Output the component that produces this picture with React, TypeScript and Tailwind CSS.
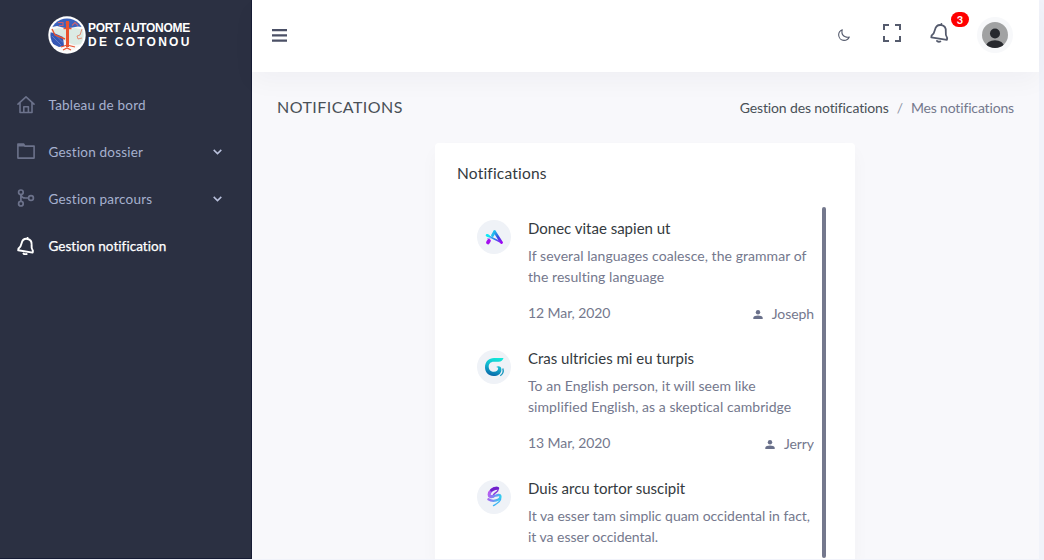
import type { ReactNode } from "react";

function HomeIcon() {
  return (
    <svg className="size-[18px] shrink-0 text-[#6c728b]" viewBox="0 0 18 18" fill="none" stroke="currentColor" strokeWidth="1.6" strokeLinejoin="round" strokeLinecap="round">
      <path d="M1 8.2 9 .9l8 7.300M3 6.700V16.500h12V6.700M6.800 16.500v-5.700h4.600v5.700" />
    </svg>
  );
}

function FolderIcon() {
  return (
    <svg className="mb-[2px] size-[18px] shrink-0 text-[#6c728b]" viewBox="0 0 18 18" fill="none" stroke="currentColor" strokeWidth="1.6" strokeLinejoin="round">
      <path d="M.9 2h5.800l1.100 2.100h9.300v12H.9z" />
      <path d="M1 2.700h6M1 3.600h6.500" />
    </svg>
  );
}

function BranchIcon() {
  return (
    <svg className="mb-[2px] size-[18px] shrink-0 text-[#6c728b]" viewBox="0 0 18 18" fill="none" stroke="currentColor" strokeWidth="1.7">
      <circle cx="3.900" cy="3.300" r="2.300" />
      <circle cx="3.900" cy="14.700" r="2.300" />
      <circle cx="14" cy="9" r="2.400" />
      <path d="M3.900 5.600v6.800M4 6.200C4.800 8.500 6.300 9 8.300 9h3.300" />
    </svg>
  );
}

function BellIcon({ className, strokeWidth }: { className: string; strokeWidth: number }) {
  return (
    <svg className={className} viewBox="0 0 20 20" fill="none" stroke="currentColor" strokeWidth={strokeWidth} strokeLinejoin="round" strokeLinecap="round">
      <g transform="rotate(9 10 10)">
        <path d="M10 2C6.600 2 4.700 4.600 4.500 7.700 4.400 10.200 4.100 12 2.100 13.800v1.900h15.800v-1.900c-2-1.800-2.300-3.600-2.400-6.100C15.300 4.600 13.400 2 10 2z" />
        <path d="M10 .9v1" />
        <path d="M8.300 18.300q1.700 1 3.400 0" />
      </g>
    </svg>
  );
}

function Chevron() {
  return (
    <svg className="ml-auto h-[6px] w-[9px] text-[#b9c0dc]" viewBox="0 0 9 6" fill="none" stroke="currentColor" strokeWidth="1.5">
      <path d="M.7.9 4.500 4.600 8.300.9" />
    </svg>
  );
}

function PortLogo() {
  return (
    <svg className="size-[38px] shrink-0" viewBox="0 0 38 38">
      <clipPath id="port-disc">
        <circle cx="19" cy="19" r="16.600" />
      </clipPath>
      <circle cx="19" cy="19" r="18.700" fill="#fff" />
      <g clipPath="url(#port-disc)">
        <path d="M0 0h38v38H0z" fill="#f8f7f5" />
        <path d="M0 0h38v11.500l-8-1-11 2-10-2.500-9 2z" fill="#3a62bd" />
        <path d="M3 14l8-2 8 2 8-2 9 2v14l-10 1-7-3z" fill="#dcebe4" />
        <path d="M1 16l5 1 9 4 1 9-5 1L1 26z" fill="#3557b4" />
        <path d="M4 20l9 9M7 18.500l8 8" stroke="#6c83cc" strokeWidth=".8" />
        <path d="M10 6.500h5v3h-4M24 9.500l3-3 3 3" fill="none" stroke="#c76070" strokeWidth="1.200" />
      </g>
      <g fill="none" stroke="#e9532f">
        <path d="M19.500 5v26" strokeWidth="3" />
        <path d="M15.500 12.500h8" strokeWidth="1.500" />
        <path d="M4 13l3 6 10 4" strokeWidth="1.400" />
        <path d="M13 31l6-2 8 2M15 34l4-2 4 2" strokeWidth="1.200" />
        <path d="M34 13l-2 6-3 1 1 3 4-1" strokeWidth=".6" />
      </g>
      <circle cx="19.500" cy="7" r="1.900" fill="#e9532f" />
    </svg>
  );
}

function ArrowLogo() {
  return (
    <svg className="size-[34px]" viewBox="0 0 34 34" fill="none" strokeLinecap="round">
      <defs>
        <linearGradient id="arrow-right" x1="17" y1="11" x2="25" y2="23" gradientUnits="userSpaceOnUse">
          <stop stopColor="#20c5ef" />
          <stop offset=".5" stopColor="#354fe0" />
          <stop offset="1" stopColor="#a300f5" />
        </linearGradient>
        <linearGradient id="arrow-cross" x1="9" y1="15" x2="25" y2="22" gradientUnits="userSpaceOnUse">
          <stop stopColor="#0ee8f5" />
          <stop offset=".55" stopColor="#3579ee" />
          <stop offset="1" stopColor="#a300f5" />
        </linearGradient>
      </defs>
      <path d="M15.500 15.500 17.600 11.800" stroke="#22bfee" strokeWidth="2.800" />
      <path d="M17.600 11.800 24.500 22.500" stroke="url(#arrow-right)" strokeWidth="2.800" />
      <path d="M10.300 15.400 24.500 22.500" stroke="url(#arrow-cross)" strokeWidth="1.700" />
      <path d="M10 15.300l1.500.7" stroke="#0ee8f5" strokeWidth="2.600" />
      <path d="M12 20.700 10.900 22.500" stroke="#a510ef" strokeWidth="3.600" />
      <path d="M10.500 18.600l3-.6" stroke="#9faaf5" strokeWidth="1" />
    </svg>
  );
}

function SwirlGLogo() {
  return (
    <svg className="size-[34px]" viewBox="0 0 34 34" fill="none">
      <defs>
        <linearGradient id="swirl-g" x1="20" y1="8" x2="15" y2="26" gradientUnits="userSpaceOnUse">
          <stop stopColor="#12e8d8" />
          <stop offset=".5" stopColor="#12b2cf" />
          <stop offset="1" stopColor="#0866a8" />
        </linearGradient>
      </defs>
      <path d="M26.500 8q-1 3.700-5 3.800h-4.800c-3.300 0-5 2.300-5 5 0 3 2.300 5 5.200 5 2.600 0 4.400-1.600 4.300-4.100l-2-.6c1.700-1.500 5.500-1 5.200 2.800-.3 3.900-3.500 6.100-7.900 6.100-5 0-8.500-3.500-8.500-8.700C8 11.500 12 8 17 8z" fill="url(#swirl-g)" />
      <path d="M25.800 18.500c1 3-.4 5.800-2.500 7.200" stroke="#1596bd" strokeWidth="1.300" />
    </svg>
  );
}

function SwirlSLogo() {
  return (
    <svg className="size-[34px]" viewBox="0 0 34 34" fill="none" strokeLinecap="round">
      <defs>
        <linearGradient id="swirl-s" x1="10" y1="13" x2="24" y2="19" gradientUnits="userSpaceOnUse">
          <stop stopColor="#c552f0" />
          <stop offset=".5" stopColor="#7d86f3" />
          <stop offset="1" stopColor="#25d9ee" />
        </linearGradient>
      </defs>
      <path d="M20 8.200c-4 0-7.800 3.300-7.800 6.500 0 2 2 2.200 4 1.500" stroke="url(#swirl-s)" strokeWidth="3.200" />
      <path d="M20.800 8.400c-2.300-.5-4.300.2-6.300 1.800" stroke="#7120ca" strokeWidth="2.800" />
      <path d="M21 9.600c.3 2.200-3 2.600-4.300 5" stroke="#8a3bdc" strokeWidth="1.500" />
      <path d="M14 16.600c3.500 0 8.800-3.200 9.400-.5.500 2.800-3 4.700-7 4.700-2 0-3.600-.5-5-1.500" stroke="url(#swirl-s)" strokeWidth="2.300" />
      <path d="M23.700 19c-.5 3-3.400 4.400-7.200 6.600" stroke="#3fb5f2" strokeWidth="1.400" />
    </svg>
  );
}

function PersonIcon() {
  return (
    <svg className="mr-[9px] h-[9px] w-[10px]" viewBox="0 0 10 9" fill="#69708a">
      <circle cx="5" cy="2.200" r="2.200" />
      <path d="M.3 9V7.800C.3 6.200 3 5.400 5 5.400s4.700.8 4.700 2.400V9z" />
    </svg>
  );
}

function MenuItem({ icon, children, active, expandable }: { icon: ReactNode; children: ReactNode; active?: boolean; expandable?: boolean }) {
  return (
    <a className={`flex h-[46.900px] items-center pr-[29px] pl-[17px] text-[13.500px] ${active ? "text-white" : "text-[#a6b0cf]"}`}>
      {icon}
      <span className={active ? "ml-[13px] tracking-[0.040px] [-webkit-text-stroke:0.250px_currentColor]" : "ml-[13.500px] tracking-[0.200px]"}>{children}</span>
      {expandable && <Chevron />}
    </a>
  );
}

interface Notice {
  title: string;
  lines: string[];
  dense?: boolean;
  date?: string;
  author?: string;
  logo: ReactNode;
}

const notices: Notice[] = [
  {
    title: "Donec vitae sapien ut",
    lines: ["If several languages coalesce, the grammar of", "the resulting language"],
    date: "12 Mar, 2020",
    author: "Joseph",
    logo: <ArrowLogo />,
  },
  {
    title: "Cras ultricies mi eu turpis",
    lines: ["To an English person, it will seem like", "simplified English, as a skeptical cambridge"],
    date: "13 Mar, 2020",
    author: "Jerry",
    logo: <SwirlGLogo />,
  },
  {
    title: "Duis arcu tortor suscipit",
    lines: ["It va esser tam simplic quam occidental in fact,", "it va esser occidental."],
    dense: true,
    logo: <SwirlSLogo />,
  },
];

function NoticeItem({ notice }: { notice: Notice }) {
  return (
    <li className="flex h-[130px] shrink-0">
      <div className="mt-1 size-[34px] shrink-0 rounded-full bg-[#eff2f7]">{notice.logo}</div>
      <div className="ml-[17px] w-[286px] text-[14px] text-[#74788d]">
        <h5 className="h-[30px] text-[15px] leading-[25px] text-[#343a40]">{notice.title}</h5>
        <p className={`leading-[20.500px] whitespace-nowrap ${notice.dense ? "tracking-[-0.025px]" : "tracking-[0.060px]"}`}>
          {notice.lines.map((line) => (
            <span className="block" key={line}>{line}</span>
          ))}
        </p>
        {notice.date && (
          <div className="mt-[16px] flex justify-between leading-5 tracking-[-0.080px]">
            <span>{notice.date}</span>
            <span className="flex items-center pt-px">
              <PersonIcon />
              {notice.author}
            </span>
          </div>
        )}
      </div>
    </li>
  );
}

export default function App() {
  return (
    <div className="flex h-[560px] w-[1044px] overflow-hidden bg-[#f1f3fa] font-['Lato','Open_Sans',sans-serif]">
      <aside className="h-[559px] w-[252px] shrink-0 border-r border-b border-[#171c35] bg-[#2b3042]">
        <div className="flex h-[82px] pt-4 pl-[48px]">
          <PortLogo />
          <div className="ml-[2px] pt-[6px] font-['Liberation_Sans',sans-serif] text-[12px] leading-[13.500px] font-bold whitespace-nowrap text-white">
            <div className="tracking-[-0.320px]">PORT AUTONOME</div>
            <div className="tracking-[2.250px]">DE COTONOU</div>
          </div>
        </div>
        <nav>
          <MenuItem icon={<HomeIcon />}>Tableau de bord</MenuItem>
          <MenuItem icon={<FolderIcon />} expandable>Gestion dossier</MenuItem>
          <MenuItem icon={<BranchIcon />} expandable>Gestion parcours</MenuItem>
          <MenuItem active icon={<BellIcon className="size-[18.500px] shrink-0" strokeWidth={2.1} />}>Gestion notification</MenuItem>
        </nav>
      </aside>

      <div className="flex h-[559px] w-[787px] shrink-0 flex-col bg-[#f8f8fb]">
        <header className="flex h-[72px] shrink-0 items-center bg-white pr-[26px] pb-[2px] pl-5 shadow-[0_10px_24px_rgba(18,38,63,0.035)]">
          <svg className="h-[13px] w-[15px]" viewBox="0 0 15 13" fill="#4b5066">
            <path d="M0 0h15v2.200H0zM0 5.300h15v2.200H0zM0 10.600h15v2.200H0z" />
          </svg>
          <svg className="mb-px ml-auto size-[12px] text-[#555b6d]" viewBox="0 0 12 12" fill="none" stroke="currentColor" strokeWidth="1.1" strokeLinejoin="round">
            <path d="M4.300.7C1.700 1.700.5 3.800.7 6.300c.2 2.800 2.400 5.100 5.300 5.100 2.300 0 4.300-1.100 5.300-3.400-1.200.4-2.700.4-4-.2C4.600 6.600 3.300 4 4.300.7z" />
          </svg>
          <svg className="mb-[4px] ml-[33px] h-[18px] w-[18px]" viewBox="0 0 18 18" fill="none" stroke="#555b6d" strokeWidth="2">
            <path d="M1 6V1h5M12 1h5v5M17 12v5h-5M6 17H1v-5" />
          </svg>
          <div className="relative mb-[4px] ml-[29px]">
            <BellIcon className="size-5 text-[#555b6d]" strokeWidth={1.8} />
            <span className="absolute -top-[11px] left-[21px] flex h-[15px] w-[18px] items-center justify-center rounded-full bg-[#fe0000] text-[11px] leading-none font-bold text-white">3</span>
          </div>
          <div className="ml-[27px] flex size-9 items-center justify-center rounded-full bg-[#f7f8fa]">
            <svg className="size-[26px]" viewBox="0 0 26 26">
              <clipPath id="avatar-disc">
                <circle cx="13" cy="13" r="13" />
              </clipPath>
              <g clipPath="url(#avatar-disc)">
                <path d="M0 0h26v26H0z" fill="#a1a2a3" />
                <circle cx="13" cy="11.500" r="5" fill="#27292e" />
                <ellipse cx="13" cy="24.500" rx="9" ry="6.300" fill="#27292e" />
              </g>
            </svg>
          </div>
        </header>

        <main className="flex flex-1 flex-col overflow-hidden">
          <div className="flex h-[71px] shrink-0 items-center justify-between pr-[25px] pb-px pl-[25px] text-[14px] text-[#495057]">
            <h4 className="text-[16px] tracking-[0.450px]">NOTIFICATIONS</h4>
            <div className="flex tracking-[-0.130px]">
              <span>Gestion des notifications</span>
              <span className="mx-[8px] text-[#9296a6]">/</span>
              <span className="tracking-[-0.160px] text-[#74788d]">Mes notifications</span>
            </div>
          </div>

          <section className="ml-[183px] flex w-[420px] flex-1 flex-col overflow-hidden rounded-t bg-white shadow-[0_9px_18px_rgba(18,38,63,0.03)]">
            <h4 className="pt-[20px] pl-[22px] text-[15.500px] leading-5 tracking-[0.200px] text-[#343a40]">Notifications</h4>
            <div className="mt-[24px] flex h-[351px] shrink-0 pl-[42px]">
              <ul className="flex h-[351px] flex-col overflow-hidden pt-[9px]">
                {notices.map((notice) => (
                  <NoticeItem key={notice.title} notice={notice} />
                ))}
              </ul>
              <div className="ml-[8px] h-[351px] w-[4px] rounded-full bg-[#74788d]" />
            </div>
          </section>
        </main>
      </div>
    </div>
  );
}
